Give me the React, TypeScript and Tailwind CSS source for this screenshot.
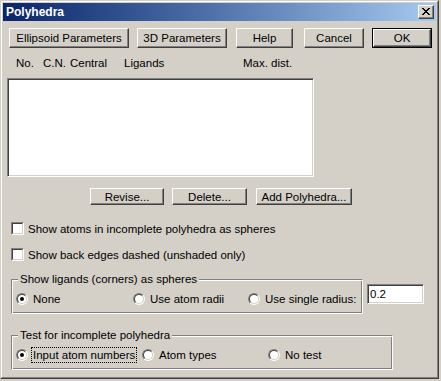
import type { ReactNode } from "react";

function Btn({ w, h = "h-[20px]", def, children }: { w: string; h?: string; def?: boolean; children: ReactNode }) {
  const inner = (
    <div className="flex h-full w-full items-center justify-center border border-t-white border-l-white border-r-[#404040] border-b-[#404040] shadow-[inset_-1px_-1px_0_#808080]">
      {children}
    </div>
  );
  if (def) {
    return <div className={`${w} ${h} shrink-0 border border-black`}>{inner}</div>;
  }
  return <div className={`${w} ${h} shrink-0`}>{inner}</div>;
}

function Check() {
  return (
    <div className="h-[13px] w-[13px] shrink-0 border border-t-[#808080] border-l-[#808080] border-r-white border-b-white">
      <div className="h-full w-full border border-t-[#404040] border-l-[#404040] border-r-[#D4D0C8] border-b-[#D4D0C8] bg-white" />
    </div>
  );
}

function Radio({ on }: { on?: boolean }) {
  return (
    <div className="h-[12px] w-[12px] shrink-0 rounded-full border border-t-[#808080] border-l-[#808080] border-r-white border-b-white">
      <div className="flex h-full w-full items-center justify-center rounded-full border border-t-[#404040] border-l-[#404040] border-r-[#D4D0C8] border-b-[#D4D0C8] bg-white">
        {on && <div className="h-[4px] w-[4px] rounded-full bg-black" />}
      </div>
    </div>
  );
}

function Group({ w, title, children }: { w: string; title: string; children: ReactNode }) {
  return (
    <div className={`relative ${w} h-[35px] shrink-0 border border-t-[#808080] border-l-[#808080] border-r-white border-b-white shadow-[inset_1px_1px_0_white,inset_-1px_-1px_0_#808080]`}>
      <span className="absolute left-[6px] top-[-8px] bg-[#D4D0C8] px-[2px] leading-[14px]">{title}</span>
      <div className="flex h-full items-center pl-[4px] pt-[4px]">{children}</div>
    </div>
  );
}

const X_PIX = [
  "11000011",
  "01100110",
  "00111100",
  "00011000",
  "00111100",
  "01100110",
  "11000011",
];

export default function App() {
  return (
    <div className="h-[381px] w-[441px] bg-[#D4D0C8] font-['Liberation_Sans',Arial,sans-serif] text-[11.5px] leading-[14px] text-black">
      <div className="h-[379px] w-[439px] border border-t-[#D4D0C8] border-l-[#D4D0C8] border-r-[#404040] border-b-[#404040]">
        <div className="flex h-full flex-col border border-t-white border-l-white border-r-[#808080] border-b-[#808080] p-px">
          {/* title bar */}
          <div className="flex h-[18px] shrink-0 items-center justify-between bg-gradient-to-r from-[#0A246A] to-[#A6CAF0] pl-[3px] pr-[2px]">
            <span className="text-[12px] font-bold text-white">Polyhedra</span>
            <div className="h-[14px] w-[16px] border border-t-white border-l-white border-r-[#404040] border-b-[#404040] bg-[#D4D0C8] shadow-[inset_-1px_-1px_0_#808080]">
              <svg width="14" height="12" viewBox="0 0 14 12" shapeRendering="crispEdges">
                {X_PIX.flatMap((row, y) =>
                  row.split("").map((c, x) =>
                    c === "1" ? <rect key={`${x}-${y}`} x={x + 3} y={y + 2} width="1" height="1" fill="#000" /> : null
                  )
                )}
              </svg>
            </div>
          </div>

          {/* top buttons */}
          <div className="mt-[7px] flex pl-[6px]">
            <Btn w="w-[120px]">Ellipsoid Parameters</Btn>
            <div className="ml-[8px]"><Btn w="w-[90px]">3D Parameters</Btn></div>
            <div className="ml-[9px]"><Btn w="w-[57px]">Help</Btn></div>
            <div className="ml-[11px]"><Btn w="w-[60px]">Cancel</Btn></div>
            <div className="ml-[8px]"><Btn w="w-[60px]" def>OK</Btn></div>
          </div>

          {/* list headers */}
          <div className="mt-[8px] flex h-[14px] pl-[13px]">
            <span className="w-[27px]">No.</span>
            <span className="w-[27px]">C.N.</span>
            <span className="w-[54px]">Central</span>
            <span className="w-[119px]">Ligands</span>
            <span>Max. dist.</span>
          </div>

          {/* list box */}
          <div className="ml-[4px] mt-[8px] h-[99px] w-[307px] border border-t-[#808080] border-l-[#808080] border-r-white border-b-white bg-white shadow-[inset_1px_1px_0_#404040,inset_-1px_-1px_0_#D4D0C8]" />

          {/* list buttons */}
          <div className="mt-[11px] flex pl-[87px]">
            <Btn w="w-[74px]" h="h-[17px]">Revise...</Btn>
            <div className="ml-[8px]"><Btn w="w-[75px]" h="h-[17px]">Delete...</Btn></div>
            <div className="ml-[9px]"><Btn w="w-[96px]" h="h-[17px]">Add Polyhedra...</Btn></div>
          </div>

          {/* checkboxes */}
          <div className="mt-[17px] flex h-[13px] items-center pl-[8px]">
            <Check />
            <span className="ml-[4px]">Show atoms in incomplete polyhedra as spheres</span>
          </div>
          <div className="mt-[13px] flex h-[13px] items-center pl-[8px]">
            <Check />
            <span className="ml-[4px]">Show back edges dashed (unshaded only)</span>
          </div>

          {/* ligands group */}
          <div className="mt-[18px] flex items-start pl-[8px]">
            <Group w="w-[352px]" title="Show ligands (corners) as spheres">
              <div className="flex w-[117px] items-center">
                <Radio on />
                <span className="ml-[5px]">None</span>
              </div>
              <div className="flex w-[115px] items-center">
                <Radio />
                <span className="ml-[5px]">Use atom radii</span>
              </div>
              <div className="flex items-center">
                <Radio />
                <span className="ml-[5px]">Use single radius:</span>
              </div>
            </Group>
            <div className="ml-[4px] mt-[5px] flex h-[20px] w-[57px] items-center border border-t-[#808080] border-l-[#808080] border-r-white border-b-white bg-white pl-[2px] shadow-[inset_1px_1px_0_#404040,inset_-1px_-1px_0_#D4D0C8]">
              0.2
            </div>
          </div>

          {/* test group */}
          <div className="mt-[21px] flex pl-[8px]">
            <Group w="w-[382px]" title="Test for incomplete polyhedra">
              <div className="flex w-[126px] items-center">
                <Radio on />
                <span className="ml-[3px] border border-dotted border-black px-[1px]">Input atom numbers</span>
              </div>
              <div className="flex w-[126px] items-center">
                <Radio />
                <span className="ml-[5px]">Atom types</span>
              </div>
              <div className="flex items-center">
                <Radio />
                <span className="ml-[5px]">No test</span>
              </div>
            </Group>
          </div>
        </div>
      </div>
    </div>
  );
}
